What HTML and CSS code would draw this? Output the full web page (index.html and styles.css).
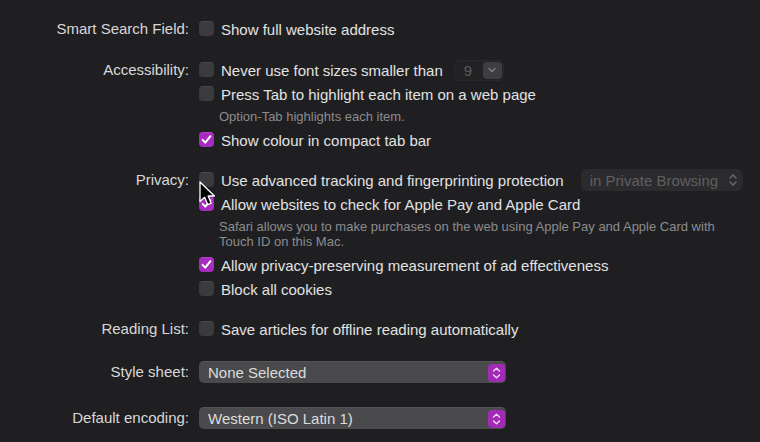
FILE: index.html
```html
<!DOCTYPE html>
<html lang="en">
<head>
<meta charset="utf-8">
<title>Safari Advanced</title>
<link rel="stylesheet" href="styles.css">
</head>
<body>
<div class="prefs">
  <section class="group">
    <div class="label">Smart Search Field:</div>
    <div class="controls">
      <div class="check"><span class="box"></span><span>Show full website address</span></div>
    </div>
  </section>

  <section class="group">
    <div class="label">Accessibility:</div>
    <div class="controls">
      <div class="check"><span class="box"></span><span>Never use font sizes smaller than</span>
        <span class="size-field"><span class="size-val">9</span><span class="size-btn"><svg width="10" height="6" viewBox="0 0 10 6"><path d="M2 1.5 L5 4.5 L8 1.5" fill="none" stroke="#808084" stroke-width="1.4" stroke-linecap="round" stroke-linejoin="round"/></svg></span></span>
      </div>
      <div class="check"><span class="box"></span><span>Press Tab to highlight each item on a web page</span></div>
      <div class="note">Option-Tab highlights each item.</div>
      <div class="check"><span class="box on"><svg width="15" height="15" viewBox="0 0 15 15"><path d="M3.6 7.9 L6.3 10.6 L11.4 4.2" fill="none" stroke="#fff" stroke-width="2" stroke-linecap="round" stroke-linejoin="round"/></svg></span><span>Show colour in compact tab bar</span></div>
    </div>
  </section>

  <section class="group">
    <div class="label">Privacy:</div>
    <div class="controls">
      <div class="check"><span class="box"></span><span>Use advanced tracking and fingerprinting protection</span>
        <span class="popup-dim"><span>in Private Browsing</span><svg width="10" height="14" viewBox="0 0 10 14"><path d="M2 5 L5 2 L8 5 M2 9 L5 12 L8 9" fill="none" stroke="#6a6a6e" stroke-width="1.4" stroke-linecap="round" stroke-linejoin="round"/></svg></span>
      </div>
      <div class="check"><span class="box on"><svg width="15" height="15" viewBox="0 0 15 15"><path d="M3.6 7.9 L6.3 10.6 L11.4 4.2" fill="none" stroke="#fff" stroke-width="2" stroke-linecap="round" stroke-linejoin="round"/></svg></span><span>Allow websites to check for Apple Pay and Apple Card</span></div>
      <div class="note">Safari allows you to make purchases on the web using Apple Pay and Apple Card with<br>Touch ID on this Mac.</div>
      <div class="check"><span class="box on"><svg width="15" height="15" viewBox="0 0 15 15"><path d="M3.6 7.9 L6.3 10.6 L11.4 4.2" fill="none" stroke="#fff" stroke-width="2" stroke-linecap="round" stroke-linejoin="round"/></svg></span><span>Allow privacy-preserving measurement of ad effectiveness</span></div>
      <div class="check"><span class="box"></span><span>Block all cookies</span></div>
    </div>
  </section>

  <section class="group">
    <div class="label">Reading List:</div>
    <div class="controls">
      <div class="check"><span class="box"></span><span>Save articles for offline reading automatically</span></div>
    </div>
  </section>

  <section class="group tall">
    <div class="label">Style sheet:</div>
    <div class="controls">
      <div class="popup"><span>None Selected</span><span class="stepper"><svg width="17" height="18" viewBox="0 0 17 18"><path d="M5.5 7 L8.5 4.2 L11.5 7 M5.5 11 L8.5 13.8 L11.5 11" fill="none" stroke="#f0d8f4" stroke-width="1.4" stroke-linecap="round" stroke-linejoin="round"/></svg></span></div>
    </div>
  </section>

  <section class="group tall">
    <div class="label">Default encoding:</div>
    <div class="controls">
      <div class="popup"><span>Western (ISO Latin 1)</span><span class="stepper"><svg width="17" height="18" viewBox="0 0 17 18"><path d="M5.5 7 L8.5 4.2 L11.5 7 M5.5 11 L8.5 13.8 L11.5 11" fill="none" stroke="#f0d8f4" stroke-width="1.4" stroke-linecap="round" stroke-linejoin="round"/></svg></span></div>
    </div>
  </section>

  <svg class="cursor" width="18" height="28" viewBox="0 0 18 28"><path d="M1 1 L1 20.5 L5.6 16.2 L8.8 23.6 L12.2 22.2 L9.1 15 L15.4 15 Z" fill="#000" stroke="#fff" stroke-width="1.3" stroke-linejoin="round"/></svg>
</div>
</body>
</html>
```

FILE: styles.css
```css
html, body {
  margin: 0;
  padding: 0;
  background: #1f1f21;
}

body {
  font-family: "Liberation Sans", Arial, sans-serif;
  font-size: 15px;
  color: #e2e2e2;
  width: 760px;
  height: 442px;
  overflow: hidden;
}

.prefs {
  position: relative;
  display: flex;
  flex-direction: column;
  gap: 16px;
  padding-top: 17px;
}

.group {
  display: grid;
  grid-template-columns: 189px auto;
  column-gap: 10px;
  align-items: start;
}

.group:first-child {
  margin-bottom: 1px;
}

.label {
  text-align: right;
  line-height: 24px;
  color: #d8d8d8;
  white-space: nowrap;
}

.group.tall .label {
  line-height: 30px;
}

.controls {
  display: flex;
  flex-direction: column;
}

.check {
  display: flex;
  align-items: center;
  height: 24px;
  white-space: nowrap;
}

.box {
  width: 15px;
  height: 15px;
  box-sizing: border-box;
  border-radius: 4px;
  background: #3b3b3d;
  border-top: 1px solid #4a4a4c;
  margin-right: 7px;
  margin-top: -2px;
  flex: none;
  display: flex;
}

.box.on {
  background: #a72bbf;
  border-top: 1px solid #b540ca;
}

.box.on svg {
  margin-top: -1px;
}

.note {
  padding: 3px 0 4px 20px;
  font-size: 13px;
  line-height: 15px;
  color: #8c8c8e;
  white-space: nowrap;
}

.size-field {
  display: flex;
  align-items: center;
  box-sizing: border-box;
  width: 50px;
  height: 21px;
  margin-left: 11px;
  border: 1px solid #29292b;
  border-radius: 5px;
  background: #222224;
  padding: 0 1px 0 9px;
}

.size-val {
  flex: 1;
  color: #5b5b5e;
}

.size-btn {
  width: 19px;
  height: 17px;
  border-radius: 4px;
  background: #3e3e41;
  display: flex;
  align-items: center;
  justify-content: center;
}

.popup-dim {
  display: flex;
  align-items: center;
  justify-content: space-between;
  box-sizing: border-box;
  width: 162px;
  height: 22px;
  margin-left: 17px;
  padding: 0 5px 0 9px;
  border-radius: 6px;
  background: #2b2b2d;
  color: #5f5f62;
}

.popup {
  display: flex;
  align-items: center;
  justify-content: space-between;
  box-sizing: border-box;
  width: 307px;
  height: 22px;
  margin-top: 4px;
  padding: 0 1px 0 9px;
  border-radius: 5px;
  background: #4a4a4d;
  border-top: 1px solid #555558;
  color: #dcdcdc;
}

.stepper {
  width: 17px;
  height: 18px;
  border-radius: 4px;
  background: #a12bb7;
  display: flex;
}

.cursor {
  position: absolute;
  left: 199px;
  top: 181px;
}
```
